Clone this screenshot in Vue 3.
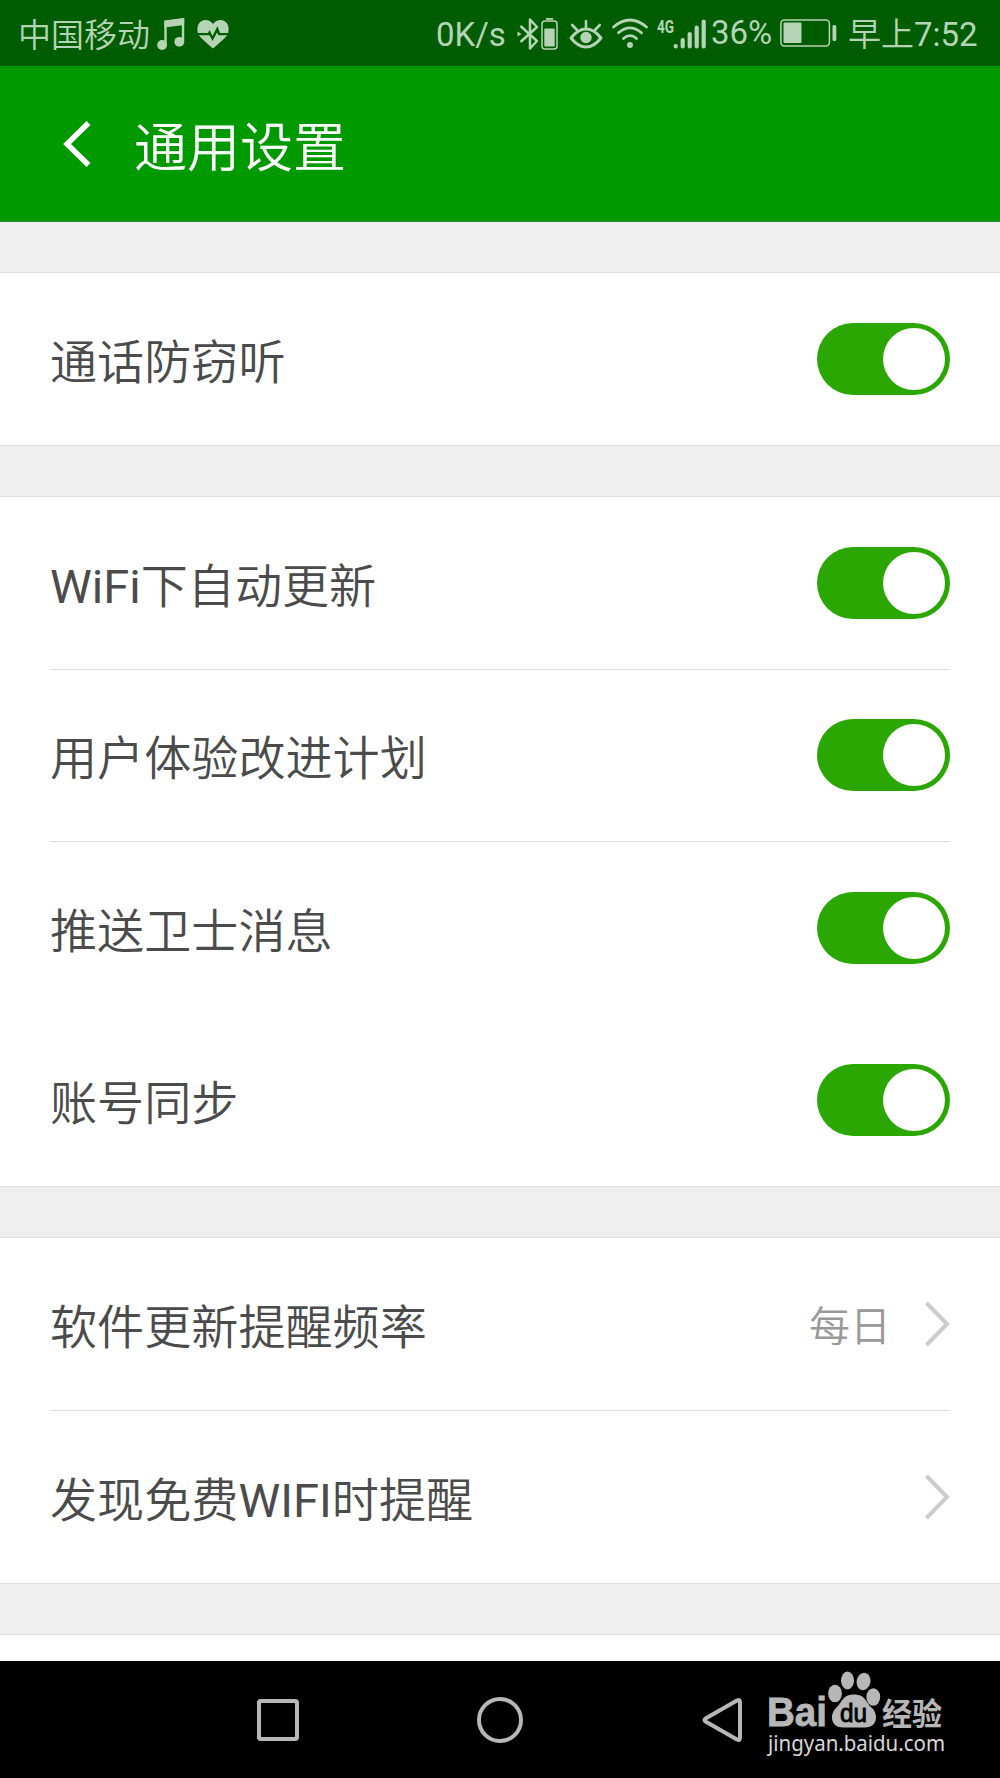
<script setup>
import { ref } from 'vue'

const groups = ref([
  [{ label: '通话防窃听', on: true, line: false }],
  [
    { label: 'WiFi下自动更新', on: true, line: true },
    { label: '用户体验改进计划', on: true, line: true },
    { label: '推送卫士消息', on: true, line: false },
    { label: '账号同步', on: true, line: false },
  ],
  [
    { label: '软件更新提醒频率', value: '每日', line: true },
    { label: '发现免费WIFI时提醒', value: '', line: false },
  ],
])

// Latin runs are set in a heavier weight than the Chinese text around them.
const runs = (text) =>
  text.split(/([A-Za-z]+)/).filter(Boolean).map((t) => ({ text: t, latin: /^[A-Za-z]/.test(t) }))
</script>

<template>
  <div class="screen">
    <div class="status">
      <span class="carrier">中国移动</span>
      <svg class="music" width="29" height="34" viewBox="0 0 29 34">
        <path d="M8.500 28V5L26 2.500V25" fill="none" stroke="currentColor" stroke-width="2.400" />
        <path d="M7.400 3.600L27.200 1V8L7.400 10.600Z" fill="currentColor" />
        <circle cx="5.100" cy="28" r="4.900" fill="currentColor" />
        <circle cx="22.300" cy="24.800" r="4.900" fill="currentColor" />
      </svg>
      <svg class="heart" width="32" height="30" viewBox="0 0 32 30">
        <path d="M0.800 14C-1 6 3 1 8.500 1Q13 1 16 5Q19 1 23.500 1C29 1 33 6 31.200 14H23L20.500 7L15.500 17L12.500 11L11 14ZM1.800 16.300H12.500L15.500 22L20 13.500L21.500 16.300H30.200Q28 19.500 16 29.500Q4 19.500 1.800 16.300Z" fill="currentColor" />
      </svg>
      <span class="speed">0K/s</span>
      <svg class="bt" width="22" height="34" viewBox="0 0 22 34">
        <path d="M3.500 9L20 24L13 31.500V2.500L20 10L3.500 25" fill="none" stroke="currentColor" stroke-width="2.500" stroke-linejoin="round" />
        <path d="M0.500 14.500L4.500 17L0.500 19.500Z" fill="currentColor" />
      </svg>
      <svg class="cell" width="17" height="34" viewBox="0 0 17 34">
        <rect x="1" y="4" width="15" height="28" rx="3" fill="none" stroke="currentColor" stroke-width="1.500" />
        <rect x="5" y="1" width="7" height="1.800" fill="currentColor" />
        <rect x="3.300" y="11.500" width="10.400" height="18" rx="1" fill="currentColor" />
      </svg>
      <svg class="eye" width="34" height="31" viewBox="0 0 34 31">
        <path d="M2 19Q9 10 17 10T32 19Q25 28 17 28T2 19Z" fill="none" stroke="currentColor" stroke-width="3" stroke-linejoin="round" />
        <circle cx="17" cy="18.500" r="5.700" fill="currentColor" />
        <path d="M17 9V2M8 11L3.200 6M26 11L30.800 6" stroke="currentColor" stroke-width="2.600" stroke-linecap="round" />
      </svg>
      <svg class="wifi" width="36" height="31" viewBox="0 0 36 31">
        <g fill="none" stroke="currentColor" stroke-width="2.800" stroke-linecap="round">
          <path d="M1.500 9Q18-5 34.500 9" /><path d="M6.500 14.800Q18 5 29.500 14.800" /><path d="M11.500 20.500Q18 14.800 24.500 20.500" />
        </g>
        <circle cx="18" cy="27" r="3" fill="currentColor" />
      </svg>
      <svg class="signal" width="50" height="33" viewBox="0 0 50 33">
        <text x="0" y="14.500" class="gen" textLength="17" lengthAdjust="spacingAndGlyphs">4G</text>
        <path d="M18.700 28V28.500M25.700 22V28.500M32.700 16V28.500M39.700 9.500V28.500M46.700 3.500V28.500" fill="none" stroke="currentColor" stroke-width="4.200" stroke-linecap="round" />
      </svg>
      <span class="percent">36%</span>
      <svg class="battery" width="57" height="28" viewBox="0 0 57 28">
        <rect x="0.900" y="0.900" width="48.500" height="26" rx="3.500" fill="none" stroke="currentColor" stroke-width="1.500" />
        <rect x="3.500" y="3.500" width="18" height="20.500" rx="1" fill="currentColor" />
        <rect x="52.500" y="6" width="3.800" height="16" rx="1.500" fill="currentColor" />
      </svg>
      <span class="clock"><span class="part">早上</span>7:52</span>
    </div>

    <header class="header">
      <svg class="back" width="27" height="46" viewBox="0 0 27 46">
        <path d="M24.500 2L3 23L24.500 44" fill="none" stroke="currentColor" stroke-width="5.500" />
      </svg>
      <h1>通用设置</h1>
    </header>

    <main class="content">
      <section v-for="(group, g) in groups" :key="g" class="group">
        <div v-for="row in group" :key="row.label" class="row" :class="{ line: row.line }">
          <span class="label"><span v-for="(run, i) in runs(row.label)" :key="i" :class="{ latin: run.latin }">{{ run.text }}</span></span>
          <button v-if="'on' in row" class="toggle" :class="{ on: row.on }" @click="row.on = !row.on"><i class="knob"></i></button>
          <template v-else>
            <span class="value">{{ row.value }}</span>
            <svg class="chevron" width="25" height="46" viewBox="0 0 25 46">
              <path d="M1.500 2L22 23L1.500 44" fill="none" stroke="currentColor" stroke-width="4" />
            </svg>
          </template>
        </div>
      </section>
      <section class="group last"></section>
    </main>

    <nav class="nav">
      <svg width="46" height="46" viewBox="0 0 46 46"><rect x="4" y="4" width="38" height="38" rx="2" /></svg>
      <svg width="50" height="50" viewBox="0 0 50 50"><circle cx="25" cy="25" r="21" /></svg>
      <svg width="46" height="50" viewBox="0 0 46 50"><path d="M38 5.500Q41 4 41 7.500V42.500Q41 46 38 44.500L6.500 26.500Q4.500 25 6.500 23.500Z" /></svg>
      <svg class="mark" width="190" height="100" viewBox="0 0 190 100">
        <text class="bai" x="7" y="56" textLength="60" lengthAdjust="spacingAndGlyphs">Bai</text>
        <ellipse cx="75" cy="23.500" rx="6.900" ry="8.800" />
        <ellipse cx="87.500" cy="10.500" rx="6.500" ry="9" />
        <ellipse cx="103.500" cy="11.500" rx="6.900" ry="8.800" transform="rotate(12 103.500 11.500)" />
        <ellipse cx="113.300" cy="27" rx="6.900" ry="8.800" />
        <path d="M94 24.500C106 24.500 106 33 112 38C119 45 117 57.500 105 57.500H83C71 57.500 69 45 76 38C82 33 82 24.500 94 24.500Z" />
        <text class="du" x="80" y="52" textLength="27" lengthAdjust="spacingAndGlyphs">du</text>
        <text class="jy" x="122" y="54.500" textLength="60" lengthAdjust="spacingAndGlyphs">经验</text>
        <text class="url" x="8" y="80.500" textLength="177" lengthAdjust="spacingAndGlyphs">jingyan.baidu.com</text>
      </svg>
    </nav>
  </div>
</template>

<style>
body {
  margin: 0;
}
</style>

<style scoped>
.screen {
  width: 1000px;
  height: 1778px;
  display: flex;
  flex-direction: column;
  overflow: hidden;
  background: #efefef;
  font-family: Roboto, "Noto Sans CJK SC", sans-serif;
}
svg {
  display: block;
  flex: none;
  overflow: visible;
}
.status {
  height: 66px;
  flex: none;
  display: flex;
  align-items: center;
  background: #005c00;
  color: #b5d4b5;
  font-size: 33px;
  line-height: 60px;
  white-space: nowrap;
}
.carrier {
  width: 138px;
  margin-left: 18px;
  padding-top: 5px;
  font-weight: 350;
}
.music { margin: 2px 0 0 1px; }
.heart { margin: 2px 0 0 11px; }
.speed { width: 72px; margin-left: 207px; padding-top: 4px; }
.bt { margin: 2px 0 0 9px; }
.cell { margin: 2px 0 0 2px; }
.eye { margin: 2px 0 0 11px; }
.wifi { margin-left: 9px; }
.signal { margin: 2px 0 0 9px; }
.gen { font: 700 19px Roboto, sans-serif; fill: currentColor; }
.percent { width: 61px; margin-left: 4px; }
.battery { margin-left: 8px; }
.clock { margin-left: 11px; padding-top: 4px; }
.part { font-weight: 350; }
.header {
  height: 156px;
  flex: none;
  display: flex;
  align-items: center;
  box-sizing: border-box;
  padding: 1px 0 0 64px;
  background: #009900;
  color: #fff;
  border-bottom: 1px solid #2b8f2b;
}
.header h1 {
  margin: 0 0 0 43px;
  padding-top: 9px;
  font-size: 53px;
  line-height: 60px;
  font-weight: 350;
}
.content {
  flex: 1;
  min-height: 0;
  display: flex;
  flex-direction: column;
  gap: 50px;
  padding-top: 50px;
}
.group {
  flex: none;
  padding: 0 50px;
  background: #fff;
  border-top: 1px solid #dcdcdc;
  border-bottom: 1px solid #dcdcdc;
}
.group.last {
  flex: 1;
  border-bottom: 0;
}
.row {
  height: 172.250px;
  box-sizing: border-box;
  display: flex;
  align-items: center;
  color: #4b4b4b;
}
.row.line {
  border-bottom: 1px solid #dfdfdf;
}
.label {
  flex: 1;
  padding-top: 8px;
  font-size: 47.100px;
  line-height: 60px;
  font-weight: 350;
}
.latin { font-weight: 400; }
.value {
  margin-right: 34px;
  padding-top: 7px;
  font-size: 41px;
  line-height: 60px;
  font-weight: 350;
  color: #999;
}
.chevron { color: #ccc; }
.toggle {
  width: 133.500px;
  height: 72px;
  padding: 5px;
  border: 0;
  border-radius: 36px;
  display: flex;
  background: #ccc;
}
.toggle.on {
  justify-content: flex-end;
  background: #2aa702;
}
.knob {
  width: 62px;
  height: 62px;
  border-radius: 50%;
  background: #fff;
}
.nav {
  position: relative;
  height: 117px;
  flex: none;
  display: flex;
  align-items: center;
  justify-content: center;
  gap: 174px;
  background: #000;
}
.nav svg:not(.mark) {
  fill: none;
  stroke: #b8b6b7;
  stroke-width: 4;
  stroke-linejoin: round;
}
.mark {
  position: absolute;
  left: 760px;
  top: 9px;
  fill: #b7b7b7;
}
.bai { font: 700 40px "Liberation Sans", sans-serif; stroke: #b7b7b7; stroke-width: 0.800px; }
.du { font: 400 26px "Liberation Sans", sans-serif; fill: #000; stroke: #000; stroke-width: 0.900px; }
.jy { font: 700 31px "Noto Sans CJK SC", sans-serif; }
.url { font: 400 22.500px "Noto Sans", sans-serif; fill: #d8d8d8; }
</style>
